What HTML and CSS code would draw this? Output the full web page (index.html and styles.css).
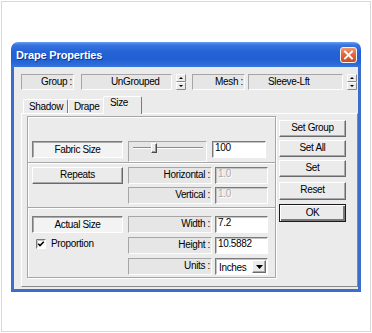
FILE: index.html
```html
<!DOCTYPE html>
<html>
<head>
<meta charset="utf-8">
<title>Drape Properties</title>
<link rel="stylesheet" href="styles.css">
</head>
<body>
<div class="frame">
  <div class="window">
    <div class="titlebar">
      <span class="title">Drape Properties</span>
      <span class="close">
        <svg width="17" height="16" viewBox="0 0 17 16">
          <defs>
            <linearGradient id="cg" x1="0" y1="0" x2="0" y2="1">
              <stop offset="0" stop-color="#f29a74"/>
              <stop offset="0.5" stop-color="#e0643c"/>
              <stop offset="1" stop-color="#cc4a22"/>
            </linearGradient>
          </defs>
          <rect x="0.5" y="0.5" width="16" height="15" rx="2.5" fill="url(#cg)" stroke="#f4f4f4"/>
          <path d="M5 4.5 L12 11.5 M12 4.5 L5 11.5" stroke="#fff" stroke-width="1.9" stroke-linecap="square"/>
        </svg>
      </span>
    </div>
    <div class="body">
      <div class="toprow">
        <div class="stat lbl w53 gap7">Group :</div>
        <div class="stat val w91 ug gap4">UnGrouped</div>
        <div class="spin gap6">
          <svg width="10" height="16" viewBox="0 0 10 16">
            <rect x="0" y="0" width="10" height="16" fill="#ebebeb"/>
            <path d="M0.5 7.5V0.5H9.5" stroke="#fff" fill="none"/>
            <path d="M0.5 7.5H9.5V0.5" stroke="#8a8a8a" fill="none"/>
            <path d="M0.5 15.5V8.5H9.5" stroke="#fff" fill="none"/>
            <path d="M0.5 15.5H9.5V8.5" stroke="#8a8a8a" fill="none"/>
            <polygon points="3,5 7,5 5,3" fill="#000"/>
            <polygon points="3,11 7,11 5,13" fill="#000"/>
          </svg>
        </div>
        <div class="stat lbl w53 gap3">Mesh :</div>
        <div class="stat val w95 sl gap4">Sleeve-Lft</div>
        <div class="spin">
          <svg width="10" height="16" viewBox="0 0 10 16">
            <rect x="0" y="0" width="10" height="16" fill="#ebebeb"/>
            <path d="M0.5 7.5V0.5H9.5" stroke="#fff" fill="none"/>
            <path d="M0.5 7.5H9.5V0.5" stroke="#8a8a8a" fill="none"/>
            <path d="M0.5 15.5V8.5H9.5" stroke="#fff" fill="none"/>
            <path d="M0.5 15.5H9.5V8.5" stroke="#8a8a8a" fill="none"/>
            <polygon points="3,5 7,5 5,3" fill="#000"/>
            <polygon points="3,11 7,11 5,13" fill="#000"/>
          </svg>
        </div>
      </div>

      <div class="tabs">
        <div class="tab t-shadow">Shadow</div>
        <div class="tab t-drape">Drape</div>
        <div class="tab t-size selected">Size</div>
      </div>

      <div class="panel">
        <div class="group">
          <div class="sec sec1">
            <div class="btn pressed c1">Fabric Size</div>
            <div class="stat slider">
              <span class="track left"></span>
              <span class="thumb"></span>
              <span class="track right"></span>
            </div>
            <div class="inp w54 ml5">100</div>
          </div>

          <div class="sec sec2">
            <div class="c1"><div class="btn">Repeats</div></div>
            <div class="rows r3">
              <div class="row"><div class="stat lbl w84">Horizontal :</div><div class="inp dis w53 ml3">1.0</div></div>
              <div class="row"><div class="stat lbl w84">Vertical :</div><div class="inp dis w53 ml3">1.0</div></div>
            </div>
          </div>

          <div class="sec sec3">
            <div class="c1">
              <div class="btn pressed">Actual Size</div>
              <div class="chk">
                <svg class="box" width="10" height="10" viewBox="0 0 10 10">
                  <rect x="0" y="0" width="10" height="10" fill="#fff"/>
                  <path d="M0.5 9.5V0.5H9.5" stroke="#7a7a7a" fill="none"/>
                  <path d="M1.5 8.5V1.5H8.5" stroke="#c4c4c4" fill="none"/>
                  <path d="M2.3 4.8 L4 6.6 L7.8 2.8" stroke="#000" stroke-width="1.6" fill="none"/>
                </svg>
                <span>Proportion</span>
              </div>
            </div>
            <div class="rows r4">
              <div class="row"><div class="stat lbl w84">Width :</div><div class="inp w53 ml3">7.2</div></div>
              <div class="row"><div class="stat lbl w84">Height :</div><div class="inp w53 ml3">10.5882</div></div>
              <div class="row"><div class="stat lbl w84">Units :</div>
                <div class="select w53 ml3">
                  <span class="seltext">Inches</span>
                  <span class="dd">
                    <svg width="7" height="4" viewBox="0 0 7 4"><polygon points="0,0 7,0 3.5,4" fill="#000"/></svg>
                  </span>
                </div>
              </div>
            </div>
          </div>
        </div>

        <div class="btncol">
          <div class="btn">Set Group</div>
          <div class="btn m3">Set All</div>
          <div class="btn m3">Set</div>
          <div class="btn m5 h18">Reset</div>
          <div class="btn def m4 h18">OK</div>
        </div>
      </div>
    </div>
  </div>
</div>
</body>
</html>
```

FILE: styles.css
```css
* { box-sizing: border-box; }

html, body {
  margin: 0;
  padding: 0;
  background: #fff;
}

body {
  font-family: "Liberation Sans", Arial, sans-serif;
  font-size: 10px;
  letter-spacing: -0.35px;
  color: #000;
}

.frame {
  margin: 1px;
  width: 370px;
  height: 331px;
  border: 1px solid #d9d9d9;
  padding: 40px 0 0 9px;
}

.window {
  width: 350px;
}

.titlebar {
  height: 25px;
  border-radius: 7px 7px 0 0;
  background: linear-gradient(#6a9ef0 0, #3874de 3px, #2463d6 10px, #2060d4 17px, #2b6ad8 22px, #3a76da 25px);
  display: flex;
  align-items: center;
  justify-content: space-between;
  padding: 0 4px 0 5px;
}

.title {
  color: #fff;
  font-weight: bold;
  font-size: 11px;
  letter-spacing: -0.15px;
  text-shadow: 1px 1px 0 #0d3590;
}

.close {
  display: flex;
  margin-top: 1px;
}

.body {
  height: 225px;
  background: #ebebeb;
  border: 3px solid #3d6dca;
  border-top: 0;
  padding: 7px 0 0 7px;
}

.toprow {
  display: flex;
  height: 16px;
}

.stat {
  background: #e6e6e6;
  border: 1px solid;
  border-color: #a6a6a6 #fdfdfd #fdfdfd #a6a6a6;
  height: 100%;
  line-height: 14px;
  white-space: nowrap;
}

.lbl {
  text-align: right;
  padding-right: 1px;
}

.val.ug { padding-left: 29px; }
.val.sl { padding-left: 19px; }

.w53 { width: 53px; }
.w54 { width: 54px; }
.w84 { width: 84px; }
.w91 { width: 91px; }
.w95 { width: 95px; }

.gap3 { margin-right: 3px; }
.gap4 { margin-right: 4px; }
.gap6 { margin-right: 6px; }
.gap7 { margin-right: 7px; }

.ml3 { margin-left: 3px; }
.ml5 { margin-left: 5px; }

.spin {
  display: flex;
  width: 10px;
  height: 16px;
}

/* Tabs */
.tabs {
  display: flex;
  align-items: flex-end;
  height: 16px;
  margin-top: 7px;
  padding-left: 2px;
}

.tab {
  height: 14px;
  border: 1px solid;
  border-bottom: 0;
  border-color: #fff #7a7a7a transparent #fff;
  border-radius: 2px 2px 0 0;
  line-height: 13px;
  padding-left: 5px;
  white-space: nowrap;
}

.t-shadow { width: 45px; }
.t-drape { width: 35px; padding-left: 5px; border-right-color: transparent; }
.t-size { width: 39px; }

.tab.selected {
  position: relative;
  z-index: 1;
  height: 18px;
  margin-bottom: -1px;
  background: #ebebeb;
  line-height: 12px;
  padding-left: 6px;
}

/* Panel */
.panel {
  display: flex;
  width: 337px;
  height: 174px;
  border: 1px solid;
  border-color: #fff #8a8a8a #8a8a8a #fff;
  padding: 2px 0 0 5px;
}

.group {
  width: 249px;
  height: 162px;
  border: 1px solid #a6a6a6;
  box-shadow: inset 1px 1px 0 #fff, 1px 1px 0 #fff;
}

.sec {
  display: flex;
  padding-left: 4px;
}

.sec1 {
  height: 45px;
  padding-top: 24px;
}

.sec2, .sec3 {
  border-top: 1px solid #a6a6a6;
  box-shadow: inset 0 1px 0 #fff;
}

.sec2 {
  height: 45px;
  padding-top: 4px;
}

.sec3 {
  height: 70px;
  padding-top: 8px;
}

.c1 {
  width: 91px;
  flex: none;
}

.rows {
  display: flex;
  flex-direction: column;
  margin-left: 5px;
}

.r3 { gap: 3px; }
.r4 { gap: 4px; }

.row {
  display: flex;
  height: 17px;
}

/* Buttons */
.btn {
  height: 17px;
  border: 1px solid;
  border-color: #fff #6a6a6a #6a6a6a #fff;
  box-shadow: inset -1px -1px 0 #a9a9a9;
  background: #ebebeb;
  text-align: center;
  line-height: 14px;
  white-space: nowrap;
}

.btn.pressed {
  border-color: #7c7c7c #fff #fff #7c7c7c;
  box-shadow: inset 1px 1px 0 #a9a9a9;
  background: #f3f3f3;
  line-height: 15px;
}

.btn.def {
  border-color: #1a1a1a;
  box-shadow: inset 1px 1px 0 #fff, inset -2px -2px 0 #7a7a7a;
  line-height: 15px;
}

.btncol {
  display: flex;
  flex-direction: column;
  width: 67px;
  margin-left: 3px;
  padding-top: 4px;
}

.m3 { margin-top: 3px; }
.m4 { margin-top: 4px; }
.m5 { margin-top: 5px; }
.h18 { height: 18px; }

/* Inputs */
.inp {
  height: 17px;
  background: #fff;
  border: 1px solid;
  border-color: #7a7a7a #fff #fff #7a7a7a;
  box-shadow: inset 1px 1px 0 #c4c4c4;
  line-height: 12px;
  padding-left: 2px;
  white-space: nowrap;
}

.inp.dis {
  background: #ebebeb;
  color: #ababab;
  text-shadow: 1px 1px 0 #fff;
}

/* Slider */
.slider {
  display: flex;
  align-items: flex-start;
  width: 79px;
  margin-left: 5px;
  padding: 1px 0 0 4px;
}

.track {
  height: 2px;
  margin-top: 4px;
  border-top: 1px solid #8a8a8a;
  border-bottom: 1px solid #fff;
}

.track.left { width: 18px; }
.track.right { width: 46px; }

.thumb {
  width: 6px;
  height: 10px;
  background: #ebebeb;
  border: 1px solid;
  border-color: #fff #4a4a4a #4a4a4a #fff;
  box-shadow: inset -1px -1px 0 #9a9a9a;
}

/* Checkbox */
.chk {
  display: flex;
  align-items: center;
  gap: 5px;
  margin: 6px 0 0 4px;
  line-height: 10px;
}

.box { flex: none; }

/* Select */
.select {
  display: flex;
  align-items: center;
  justify-content: space-between;
  height: 17px;
  background: #fff;
  border: 1px solid;
  border-color: #7a7a7a #fff #fff #7a7a7a;
  box-shadow: inset 1px 1px 0 #c4c4c4;
  padding: 0 1px 0 3px;
}

.seltext {
  line-height: 13px;
  margin-top: 1px;
}

.dd {
  display: flex;
  align-items: center;
  justify-content: center;
  width: 14px;
  height: 13px;
  background: #ebebeb;
  border: 1px solid;
  border-color: #fff #6a6a6a #6a6a6a #fff;
  box-shadow: inset -1px -1px 0 #a9a9a9;
}
```
